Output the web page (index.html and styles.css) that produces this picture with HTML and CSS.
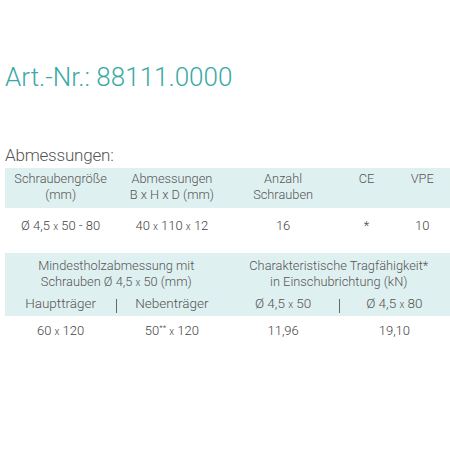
FILE: index.html
```html
<!DOCTYPE html>
<html lang="de">
<head>
<meta charset="utf-8">
<link rel="stylesheet" href="styles.css">
</head>
<body>
<div class="page">
  <h1 class="title">Art.-Nr.: 88111.0000</h1>
  <h2 class="section">Abmessungen:</h2>
  <div class="table t1">
    <div class="cell head">Schraubengröße<br>(mm)</div>
    <div class="cell head">Abmessungen<br>B x H x D (mm)</div>
    <div class="cell head">Anzahl<br>Schrauben</div>
    <div class="cell head">CE</div>
    <div class="cell head">VPE</div>
    <div class="cell data">Ø 4,5 <span class="x">x</span> 50 - 80</div>
    <div class="cell data">40 <span class="x">x</span> 110 <span class="x">x</span> 12</div>
    <div class="cell data">16</div>
    <div class="cell data">*</div>
    <div class="cell data">10</div>
  </div>
  <div class="table t2">
    <div class="cell head span2">Mindestholzabmessung mit<br>Schrauben Ø 4,5 <span class="x">x</span> 50 (mm)</div>
    <div class="cell head span2">Charakteristische Tragfähigkeit*<br>in Einschubrichtung (kN)</div>
    <div class="cell sub">Hauptträger</div>
    <div class="cell sub sep">Nebenträger</div>
    <div class="cell sub">Ø 4,5 <span class="x">x</span> 50</div>
    <div class="cell sub sep">Ø 4,5 <span class="x">x</span> 80</div>
    <div class="cell data">60 <span class="x">x</span> 120</div>
    <div class="cell data">50<sup>**</sup> <span class="x">x</span> 120</div>
    <div class="cell data">11,96</div>
    <div class="cell data">19,10</div>
  </div>
</div>
</body>
</html>
```
FILE: styles.css
```css
html, body {
  margin: 0;
  padding: 0;
  background: #ffffff;
}
body {
  font-family: Roboto, "Liberation Sans", sans-serif;
  font-weight: 300;
  color: #555555;
  overflow: hidden;
}
.page {
  padding: 61px 0 0 5px;
  width: 445px;
}
.title {
  margin: 0;
  font-size: 26px;
  font-weight: 300;
  color: #3aa9a6;
  line-height: 32px;
  letter-spacing: 0;
}
.section {
  margin: 51px 0 0 0;
  font-size: 17px;
  font-weight: 300;
  color: #555555;
  line-height: 22px;
  letter-spacing: -0.2px;
}
.table {
  display: grid;
  font-size: 12.8px;
  line-height: 16px;
  text-align: center;
}
.t1 {
  grid-template-columns: 2fr 2fr 2fr 1fr 1fr;
  margin-top: 2px;
}
.t2 {
  grid-template-columns: 1fr 1fr 1fr 1fr;
  margin-top: 8px;
}
.cell {
  position: relative;
}
.head {
  background: #dff0f0;
}
.t1 .head {
  height: 40px;
  box-sizing: border-box;
  padding-top: 3px;
}
.t2 .head {
  padding: 5px 0 0;
}
.span2 {
  grid-column: span 2;
}
.sub {
  background: #dff0f0;
  padding: 4px 0 3px;
  font-size: 13.5px;
}
.sep::before {
  content: "";
  position: absolute;
  left: 0;
  top: 8px;
  width: 1px;
  height: 14px;
  background: #666666;
}
.data {
  padding: 10px 0 10px;
  font-size: 13px;
  color: #444444;
}
.t2 .data {
  padding-top: 7px;
}
.x {
  font-size: 10px;
}
sup {
  font-size: 8px;
  line-height: 0;
  vertical-align: 5px;
}
```
